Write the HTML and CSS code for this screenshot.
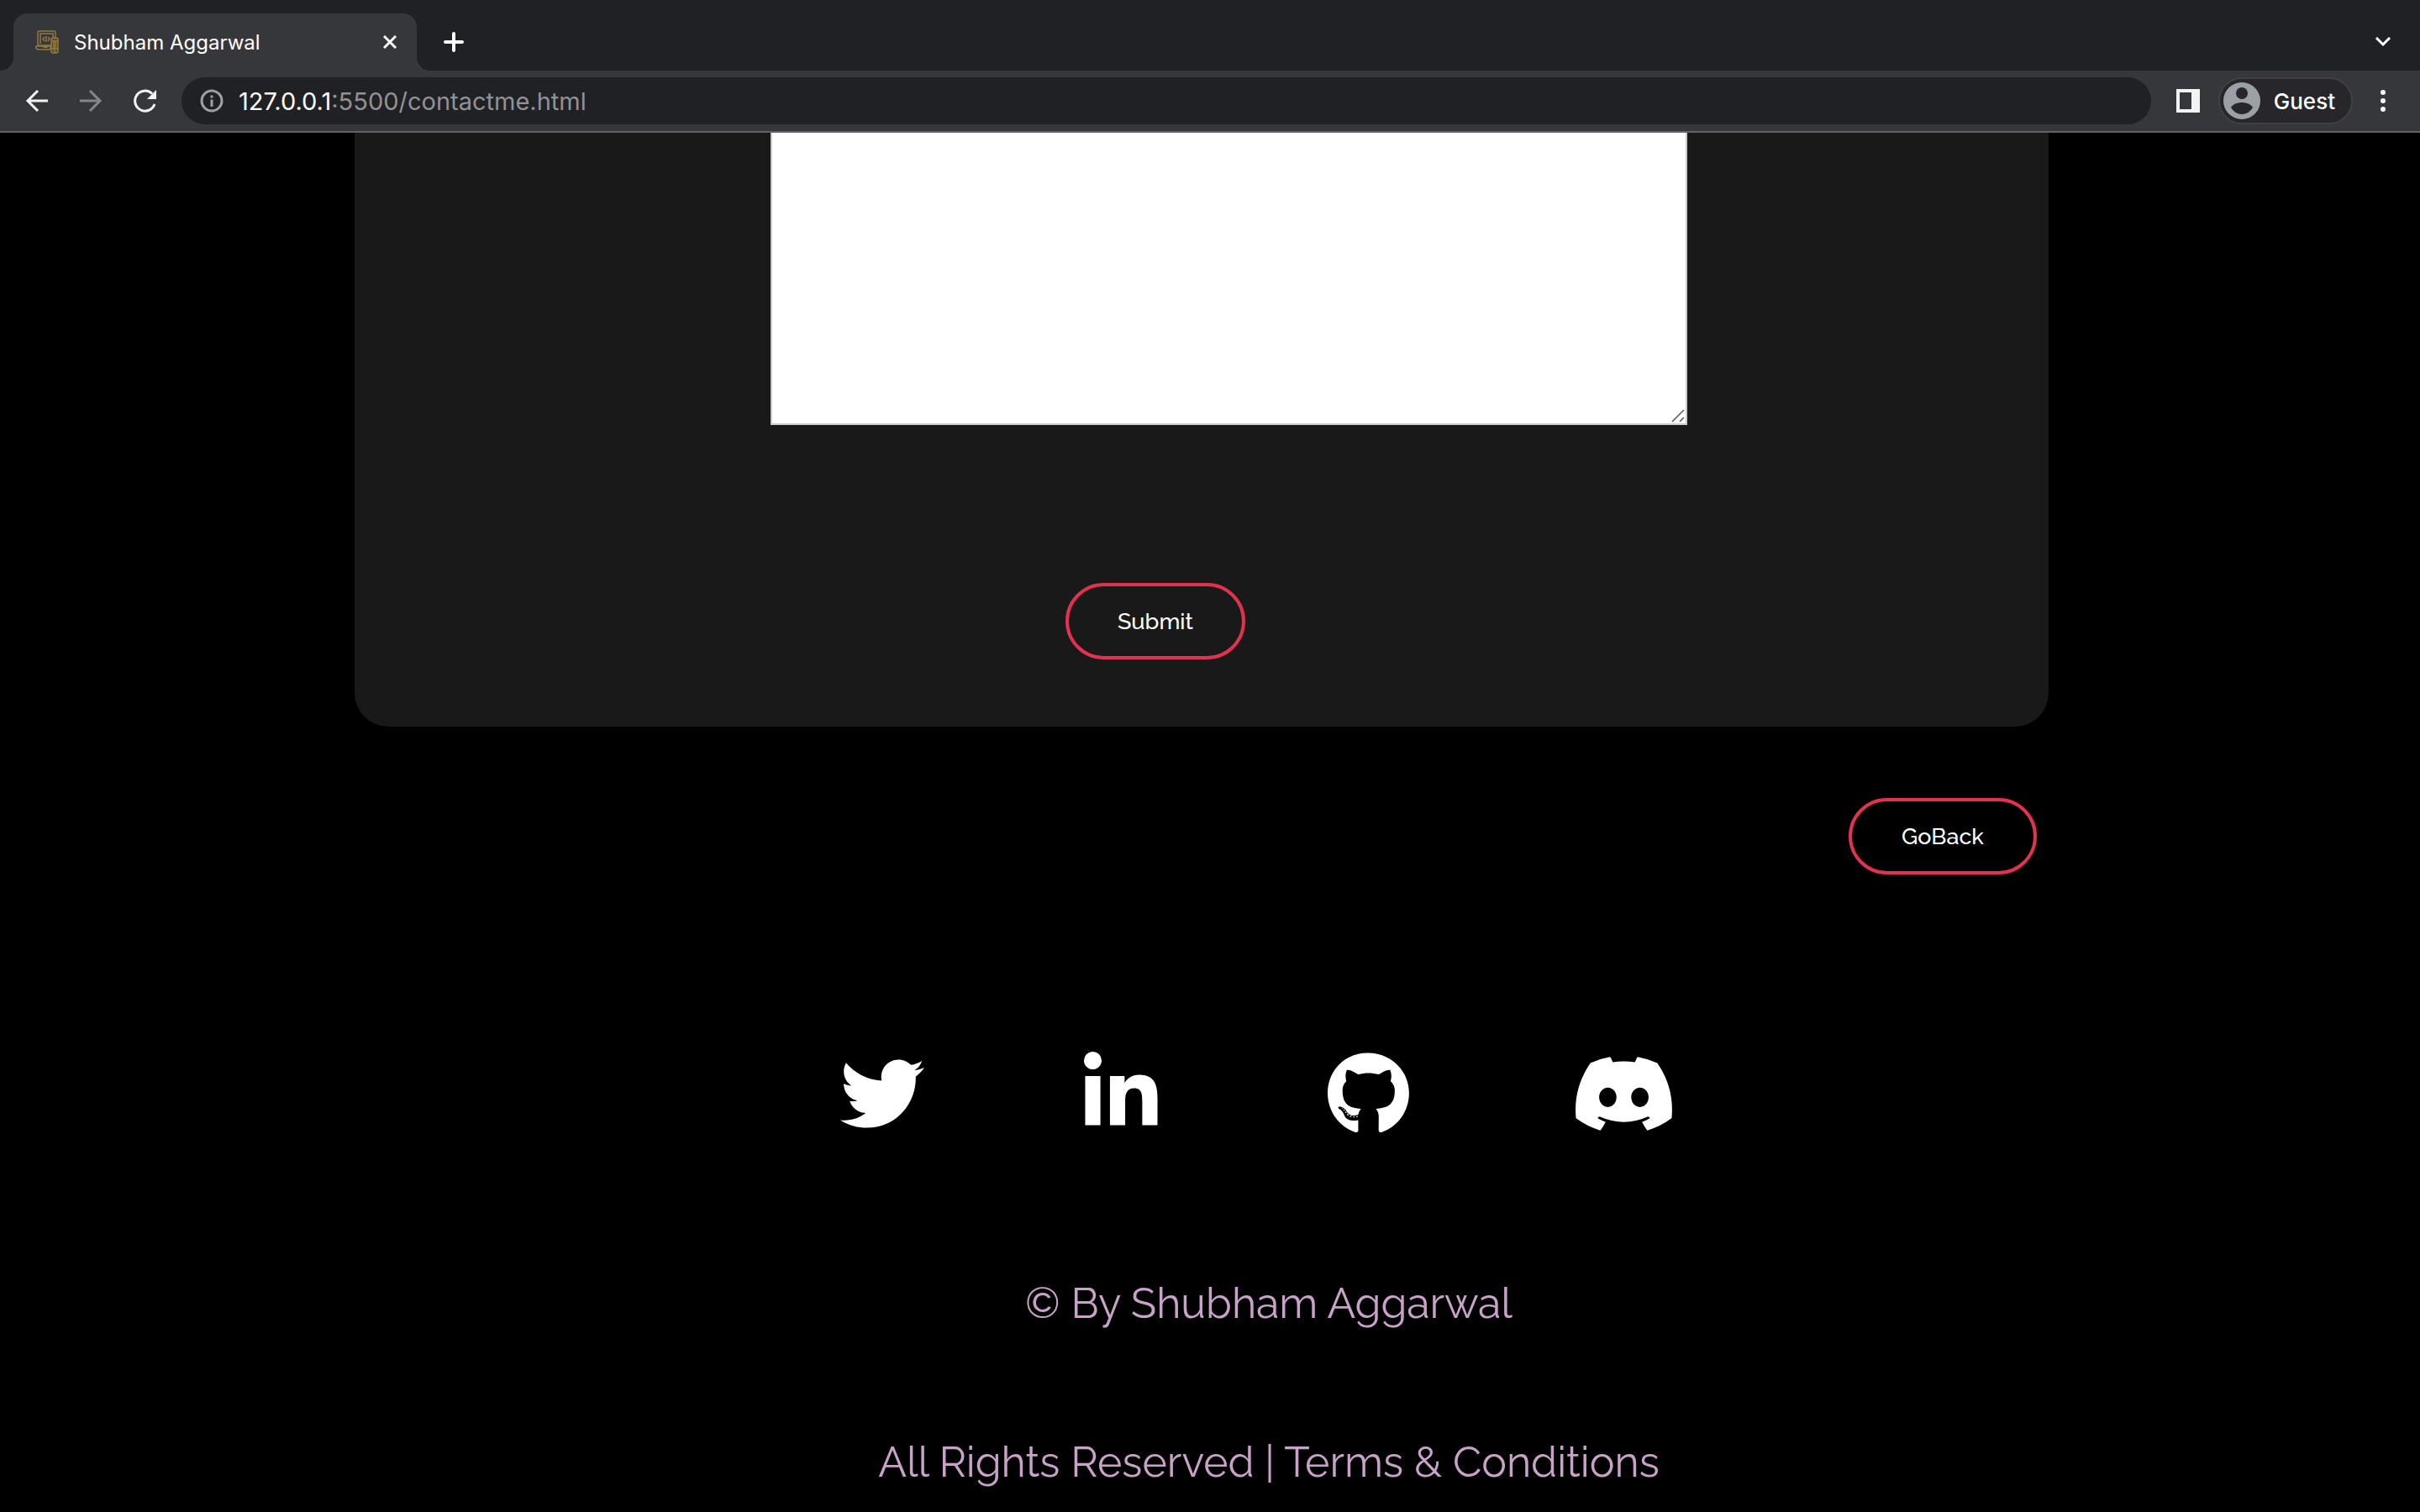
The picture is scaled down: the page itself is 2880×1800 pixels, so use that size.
FILE: index.html
```html
<!DOCTYPE html>
<html lang="en">
<head>
<meta charset="utf-8">
<title>Shubham Aggarwal</title>
<link rel="stylesheet" href="styles.css">
</head>
<body>
<header class="browser">
  <div class="tab-strip">
    <div class="tab">
      <svg class="favicon" viewBox="0 0 28 28" fill="none" stroke="#94793a" stroke-width="1.5">
        <rect x="3" y="1" width="21" height="17" rx="2"/><path d="M6 16V4h15v6M1 19h17v2c0 1-1 2-2 2H4c-2 0-3-1-3-3zM9 19c1 2 5 2 6 0M11 8l-2 2 2 3M15 8l2 2-2 3M13 7v7"/><path fill="#5b4e36" d="M19 11c0-1 1-2 2-2h4c1 0 2 1 2 2v14c0 1-1 2-2 2h-4c-1 0-2-1-2-2zM19 13h8M19 22h8M23 22v5M22 13v9M24 13v9"/>
      </svg>
      <span class="tab-title">Shubham Aggarwal</span>
      <button class="icon-button" aria-label="Close tab"><svg width="16" height="16" viewBox="0 0 16 16" fill="none" stroke="#fff" stroke-width="3"><path d="M1 1l14 14M15 1L1 15"/></svg></button>
    </div>
    <button class="icon-button new-tab" aria-label="New tab"><svg width="24" height="24" viewBox="0 0 24 24" fill="none" stroke="#fff" stroke-width="4" stroke-linecap="round"><path d="M12 2v20M2 12h20"/></svg></button>
    <button class="icon-button tab-search" aria-label="Search tabs"><svg width="20" height="12" viewBox="0 0 20 12" fill="none" stroke="#fff" stroke-width="3"><path d="M2 1l8 8 8-8"/></svg></button>
  </div>
  <div class="toolbar">
    <nav class="nav-buttons" aria-label="History">
      <button class="icon-button" aria-label="Back"><svg width="28" height="28" viewBox="0 0 28 28" fill="none" stroke="#f1f3f4" stroke-width="3"><path d="M27 14H3M15 2L3 14l12 12"/></svg></button>
      <button class="icon-button" aria-label="Forward"><svg width="28" height="28" viewBox="0 0 28 28" fill="none" stroke="#85868a" stroke-width="3"><path d="M1 14h24M13 2l12 12-12 12"/></svg></button>
      <button class="icon-button" aria-label="Reload"><svg width="28" height="28" viewBox="0 0 28 28"><path d="M26 18A12 12 0 1 1 23 5.500" fill="none" stroke="#f1f3f4" stroke-width="3"/><path d="M28 1v11H17z" fill="#f1f3f4"/></svg></button>
    </nav>
    <div class="address">
      <svg width="28" height="28" viewBox="0 0 28 28"><circle cx="14" cy="14" r="12" fill="none" stroke="#9aa0a6" stroke-width="3"/><path d="M12.500 12.500h3V21h-3zM12.500 7.500h3v3h-3z" fill="#9aa0a6"/></svg>
      <span><span class="host">127.0.0.1</span>:5500/contactme.html</span>
    </div>
    <button class="icon-button" aria-label="Side panel"><svg width="28" height="28" viewBox="0 0 28 28"><path fill="#f1f3f4" fill-rule="evenodd" d="M0 0h28v28H0zM4 4v20h14V4z"/></svg></button>
    <button class="profile"><svg width="44" height="44" viewBox="0 0 44 44"><circle cx="22" cy="22" r="22" fill="#9aa0a6"/><circle cx="22" cy="13" r="7" fill="#27262b"/><path fill="#27262b" d="M9 30c2-4 8-6 13-6s11 2 13 6c-3 5-8 8-13 8s-10-3-13-8z"/></svg>Guest</button>
    <button class="icon-button menu" aria-label="Menu"><svg width="8" height="28" viewBox="0 0 8 28" fill="#f1f3f4"><circle cx="4" cy="4" r="3"/><circle cx="4" cy="14" r="3"/><circle cx="4" cy="24" r="3"/></svg></button>
  </div>
</header>
<main class="content">
  <form class="card">
    <div class="message-field">
      <textarea class="message" aria-label="Message"></textarea>
      <svg class="grip" width="16" height="16" viewBox="0 0 16 16" fill="none" stroke="#555" stroke-width="1.5"><path d="M1 15L15 1M10 15l5-5"/></svg>
    </div>
    <button type="button" class="pill submit">Submit</button>
  </form>
  <a class="pill go-back" href="#">GoBack</a>
</main>
<footer class="footer">
  <nav class="social" aria-label="Social">
    <a href="#" aria-label="Twitter"><svg height="100" viewBox="0 0 512 512"><path d="M459.370 151.716c.325 4.548.325 9.097.325 13.645 0 138.720-105.583 298.558-298.558 298.558-59.452 0-114.680-17.219-161.137-47.106 8.447.974 16.568 1.299 25.340 1.299 49.055 0 94.213-16.568 130.274-44.832-46.132-.975-84.792-31.188-98.112-72.772 6.498.974 12.995 1.624 19.818 1.624 9.421 0 18.843-1.300 27.614-3.573-48.081-9.747-84.143-51.980-84.143-102.985v-1.299c13.969 7.797 30.214 12.670 47.431 13.319-28.264-18.843-46.781-51.005-46.781-87.391 0-19.492 5.197-37.360 14.294-52.954 51.655 63.675 129.300 105.258 216.365 109.807-1.624-7.797-2.599-15.918-2.599-24.040 0-57.828 46.782-104.934 104.934-104.934 30.213 0 57.502 12.670 76.670 33.137 23.715-4.548 46.456-13.320 66.599-25.340-7.798 24.366-24.366 44.833-46.132 57.827 21.117-2.273 41.584-8.122 60.426-16.243-14.292 20.791-32.161 39.308-52.628 54.253z"/></svg></a>
    <a href="#" aria-label="LinkedIn"><svg height="100" viewBox="0 0 448 512"><path d="M100.280 448H7.400V148.900h92.880zM53.790 108.100C24.090 108.100 0 83.500 0 53.800a53.790 53.790 0 0 1 107.580 0c0 29.700-24.100 54.300-53.790 54.300zM447.900 448h-92.680V302.400c0-34.700-.7-79.200-48.290-79.200-48.290 0-55.690 37.700-55.690 76.700V448h-92.780V148.900h89.080v40.800h1.300c12.400-23.500 42.690-48.300 87.880-48.300 94 0 111.280 61.900 111.280 142.300V448z"/></svg></a>
    <a href="#" aria-label="GitHub"><svg height="100" viewBox="0 0 496 512"><path d="M165.900 397.400c0 2-2.300 3.600-5.200 3.600-3.300.3-5.600-1.300-5.600-3.600 0-2 2.300-3.600 5.200-3.600 3-.3 5.600 1.300 5.600 3.600zm-31.100-4.500c-.7 2 1.300 4.300 4.300 4.900 2.600 1 5.600 0 6.200-2s-1.300-4.300-4.300-5.200c-2.600-.7-5.500.3-6.200 2.300zm44.200-1.700c-2.900.7-4.900 2.600-4.600 4.900.3 2 2.900 3.300 5.900 2.600 2.900-.7 4.900-2.600 4.600-4.600-.3-1.900-3-3.200-5.900-2.900zM244.800 8C106.100 8 0 113.300 0 252c0 110.900 69.800 205.800 169.500 239.200 12.800 2.300 17.300-5.600 17.300-12.100 0-6.200-.3-40.400-.3-61.400 0 0-70 15-84.700-29.800 0 0-11.400-29.100-27.800-36.600 0 0-22.900-15.700 1.600-15.400 0 0 24.900 2 38.600 25.800 21.900 38.600 58.600 27.500 72.900 20.900 2.300-16 8.800-27.100 16-33.700-55.900-6.200-112.300-14.300-112.300-110.500 0-27.500 7.600-41.300 23.600-58.900-2.600-6.500-11.100-33.300 2.600-67.900 20.900-6.500 69 27 69 27 20-5.600 41.500-8.500 62.800-8.500s42.800 2.900 62.800 8.500c0 0 48.100-33.600 69-27 13.700 34.700 5.200 61.400 2.600 67.900 16 17.700 25.800 31.500 25.800 58.900 0 96.500-58.900 104.200-114.800 110.500 9.200 7.900 17 22.900 17 46.400 0 33.700-.3 75.400-.3 83.600 0 6.500 4.600 14.400 17.300 12.100C428.200 457.800 496 362.900 496 252 496 113.300 383.500 8 244.800 8zM97.200 352.900c-1.300 1-1 3.300.7 5.200 1.600 1.600 3.900 2.300 5.200 1 1.300-1 1-3.300-.7-5.200-1.600-1.600-3.900-2.300-5.200-1zm-10.800-8.100c-.7 1.300.3 2.900 2.300 3.900 1.600 1 3.600.7 4.300-.7.7-1.300-.3-2.900-2.300-3.900-2-.6-3.600-.3-4.300.7zm32.400 35.600c-1.600 1.300-1 4.300 1.300 6.200 2.300 2.300 5.200 2.600 6.500 1 1.300-1.300.7-4.300-1.300-6.200-2.200-2.300-5.200-2.600-6.500-1zm-11.400-14.700c-1.600 1-1.600 3.600 0 5.900 1.600 2.300 4.300 3.300 5.600 2.300 1.600-1.300 1.600-3.900 0-6.200-1.400-2.300-4-3.300-5.600-2z"/></svg></a>
    <a href="#" aria-label="Discord"><svg height="100" viewBox="0 0 640 512"><path d="M524.531,69.836a1.500,1.500,0,0,0-.764-.7A485.065,485.065,0,0,0,404.081,32.030a1.816,1.816,0,0,0-1.923.910,337.461,337.461,0,0,0-14.900,30.600,447.848,447.848,0,0,0-134.426,0,309.541,309.541,0,0,0-15.135-30.600,1.890,1.890,0,0,0-1.924-.910A483.689,483.689,0,0,0,116.085,69.137a1.712,1.712,0,0,0-.788.676C39.068,183.651,18.186,294.690,28.430,404.354a2.016,2.016,0,0,0,.765,1.375A487.666,487.666,0,0,0,176.020,479.918a1.900,1.900,0,0,0,2.063-.676A348.200,348.200,0,0,0,208.120,430.400a1.860,1.860,0,0,0-1.019-2.588,321.173,321.173,0,0,1-45.868-21.853,1.885,1.885,0,0,1-.185-3.126c3.082-2.309,6.166-4.711,9.109-7.137a1.819,1.819,0,0,1,1.900-.256c96.229,43.917,200.410,43.917,295.500,0a1.812,1.812,0,0,1,1.924.233c2.944,2.426,6.027,4.851,9.132,7.160a1.884,1.884,0,0,1-.162,3.126,301.407,301.407,0,0,1-45.890,21.830,1.875,1.875,0,0,0-1,2.611,391.055,391.055,0,0,0,30.014,48.815,1.864,1.864,0,0,0,2.063.7A486.048,486.048,0,0,0,610.700,405.729a1.882,1.882,0,0,0,.765-1.352C623.729,277.594,590.933,167.465,524.531,69.836ZM222.491,337.580c-28.972,0-52.844-26.587-52.844-59.239S193.056,219.100,222.491,219.100c29.665,0,53.306,26.820,52.843,59.239C275.334,310.993,251.924,337.580,222.491,337.580Zm195.380,0c-28.971,0-52.843-26.587-52.843-59.239S388.437,219.100,417.871,219.100c29.667,0,53.307,26.820,52.844,59.239C470.715,310.993,447.538,337.580,417.871,337.580Z"/></svg></a>
  </nav>
  <p class="legal">© By Shubham Aggarwal</p>
  <p class="legal">All Rights Reserved | Terms &amp; Conditions</p>
</footer>
</body>
</html>
```
FILE: styles.css
```css
* { box-sizing: border-box; }

body {
  margin: 0;
  background: #000;
  color: #fff;
  font-family: Raleway, Lato, sans-serif;
}

svg { display: block; flex: none; }

/* Browser chrome */
.browser {
  font-family: Inter, "Liberation Sans", sans-serif;
  background: #36373b;
  border-bottom: 2px solid #626366;
}

.icon-button {
  display: flex;
  padding: 0;
  border: 0;
  background: none;
}

.tab-strip {
  display: flex;
  align-items: center;
  padding: 16px 34px 0 16px;
  background: #202124;
}

.tab {
  position: relative;
  display: flex;
  align-items: center;
  width: 480px;
  height: 68px;
  padding: 0 24px 0 26px;
  border-radius: 16px 16px 0 0;
  background: #36373b;
}

.tab::before,
.tab::after {
  content: "";
  position: absolute;
  bottom: 0;
  width: 16px;
  height: 16px;
}

.tab::before {
  left: -16px;
  background: radial-gradient(circle at 0 0, #202124 16px, #36373b 16px);
}

.tab::after {
  right: -16px;
  background: radial-gradient(circle at 100% 0, #202124 16px, #36373b 16px);
}

.favicon {
  width: 28px;
  height: 28px;
  margin-right: 18px;
}

.tab-title {
  flex: 1;
  font-size: 24px;
}

.new-tab { margin-left: 32px; }
.tab-search { margin-left: auto; }

.toolbar {
  display: flex;
  align-items: center;
  height: 72px;
  padding: 0 40px 0 30px;
}

.nav-buttons {
  display: flex;
  gap: 36px;
  margin-right: 30px;
}

.address {
  display: flex;
  flex: 1;
  align-items: center;
  gap: 18px;
  height: 56px;
  margin-right: 30px;
  padding: 0 22px;
  border-radius: 28px;
  background: #202124;
  color: #919294;
  font-size: 29px;
}

.host { color: #fff; }

.profile {
  display: flex;
  align-items: center;
  gap: 16px;
  height: 56px;
  margin: 0 32px 0 22px;
  padding: 0 19px 0 4px;
  border: 2px solid #414045;
  border-radius: 28px;
  background: #27262b;
  color: #fff;
  font: 500 26px Inter, sans-serif;
}

/* Contact form */
.content {
  display: flex;
  flex-direction: column;
  width: 70%;
  margin-left: 422px;
}

.card {
  display: flex;
  flex-direction: column;
  align-items: flex-start;
  padding-bottom: 80px;
  border-radius: 0 0 40px 40px;
  background: #191919;
}

.message-field {
  position: relative;
  width: 1091px;
  margin-left: 495px;
}

.message {
  display: block;
  width: 100%;
  height: 348px;
  border: 2px solid #ccc;
  border-top: 0;
  background: #fff;
  resize: none;
}

.grip {
  position: absolute;
  right: 3px;
  bottom: 3px;
}

.pill {
  padding: 24px 56px;
  border: 4px solid #e33150;
  border-radius: 46px;
  background: none;
  color: #fff;
  font: 500 27px/35px Raleway, Lato, sans-serif;
  text-align: center;
  text-decoration: none;
}

.submit {
  width: 214px;
  margin: 188px 0 0 846px;
}

.go-back {
  align-self: flex-end;
  width: 224px;
  margin: 85px 14px 0 0;
}

/* Footer */
.footer {
  display: flex;
  flex-direction: column;
  align-items: center;
  padding: 211px 0 0 140px;
}

.social {
  display: grid;
  grid-template-columns: repeat(4, 290px);
  justify-content: center;
  margin-left: 140px;
  margin-bottom: 170px;
  fill: #fff;
}

.legal {
  margin: 0 0 129px;
  color: #c8a2c8;
  font-size: 50px;
  line-height: 60px;
}

.legal:last-child { margin-bottom: 0; }
```
